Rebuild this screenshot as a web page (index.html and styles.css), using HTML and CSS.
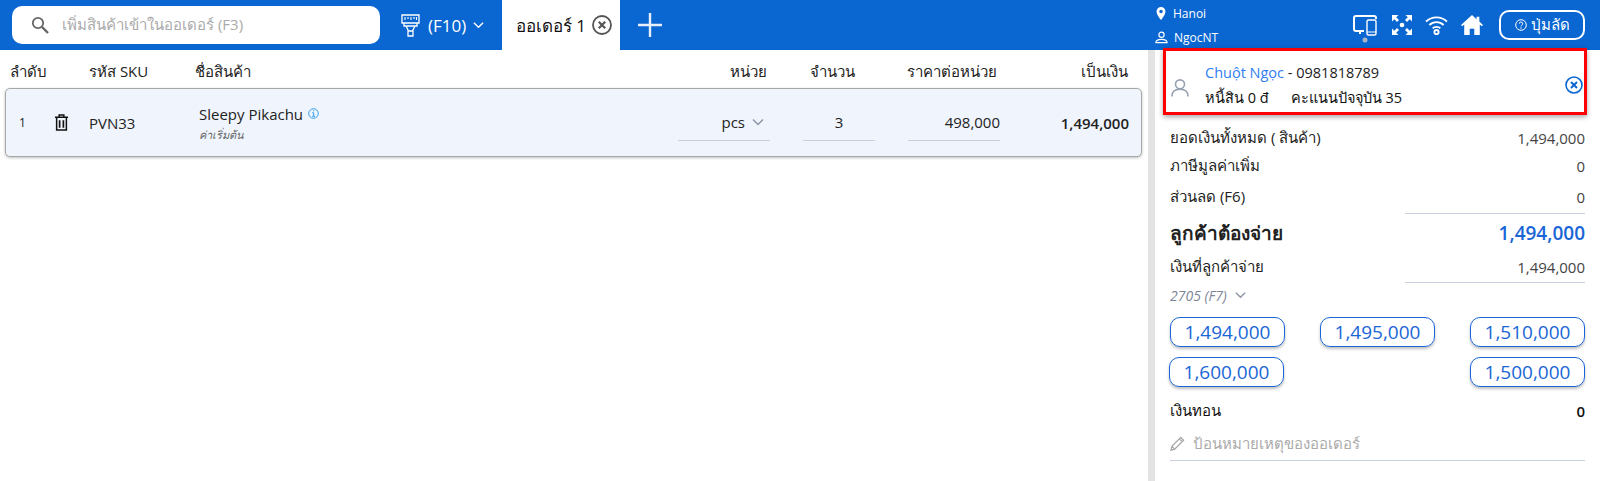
FILE: index.html
```html
<!DOCTYPE html>
<html lang="en">
<head>
    <meta charset="UTF-8">
    <title>POS</title>
    <link rel="stylesheet" href="styles.css">
</head>
<body>
<div class="topbar">
    <div class="search">
        <svg class="search-icon" viewBox="0 0 20 20" width="20" height="20"><circle cx="8" cy="8" r="5.200" fill="none" stroke="#666" stroke-width="1.800"/><path d="M12 12l6 6" stroke="#666" stroke-width="2.400"/></svg>
        <span>เพิ่มสินค้าเข้าในออเดอร์ (F3)</span>
    </div>
    <div class="scanner">
        <svg viewBox="0 0 19 23" width="19" height="23" fill="none" stroke="#fff" stroke-width="1.300"><path d="M1 1h17v8H1zM3 9v3h13V9M5 12h9l-2 4v6H7v-6zM7 17h5"/><path d="M4 3v3M7 3v2M10 3v3M13 3v2M15.500 3v3" stroke-width="1.100"/></svg>
        <span>(F10)</span>
        <svg class="chev" viewBox="0 0 12 8" width="11" height="8"><path d="M1 1.500l5 5 5-5" fill="none" stroke="#fff" stroke-width="1.500"/></svg>
    </div>
    <div class="tab">
        <span>ออเดอร์ 1</span>
        <svg viewBox="0 0 20 20" width="20" height="20" fill="none" stroke="#555" stroke-width="1.800"><circle cx="10" cy="10" r="9"/><path d="M6.800 6.800l6.400 6.400M13.200 6.800l-6.400 6.400" stroke-width="2.200"/></svg>
    </div>
    <svg class="plus" viewBox="0 0 24 24" width="24" height="24"><path d="M12 0v24M0 12h24" stroke="#e8effa" stroke-width="2.400"/></svg>
    <div class="topbar-right">
        <div class="place">
            <div class="place-row"><svg viewBox="0 0 12 14" width="12" height="13"><path fill="#fff" fill-rule="evenodd" d="M6 0a4.800 4.800 0 0 0-4.800 4.800C1.200 8.300 6 14 6 14s4.800-5.700 4.800-9.200A4.800 4.800 0 0 0 6 0zm0 3a1.900 1.900 0 1 1 0 3.800A1.900 1.900 0 0 1 6 3z"/></svg>Hanoi</div>
            <div class="place-row"><svg viewBox="0 0 14 14" width="13" height="13" fill="none" stroke="#fff" stroke-width="1.300"><circle cx="7" cy="4" r="2.800"/><path d="M1 12.500c0-2.500 2-3.500 6-3.500s6 1 6 3.500z"/></svg>NgocNT</div>
        </div>
        <svg class="devices" viewBox="0 0 24 30" width="24" height="30" fill="none" stroke="#fff" stroke-width="2"><path d="M11 16H3a2 2 0 0 1-2-2V3a2 2 0 0 1 2-2h18a2 2 0 0 1 2 2v1M7 16v3"/><rect x="14" y="5" width="9" height="15" rx="1.500" stroke-width="1.400"/><path d="M14 17h9" stroke-width="1"/><circle cx="12" cy="25" r="2.500" fill="#aab4c4" stroke="none"/></svg>
        <svg class="expand" viewBox="0 0 22 22" width="22" height="22" fill="#fff"><circle cx="11" cy="11" r="2.300"/><path d="M1 1h6.500L5.200 3.300 8 6 6 8 3.300 5.200 1 7.500zM21 1v6.500l-2.300-2.300L16 8l-2-2 2.800-2.700L14.500 1zM1 21v-6.500l2.300 2.300L6 14l2 2-2.800 2.700L7.500 21zM21 21h-6.500l2.300-2.300L14 16l2-2 2.700 2.800 2.300-2.300z"/></svg>
        <svg class="wifi" viewBox="0 0 24 21" width="23" height="20" fill="none" stroke="#fff" stroke-width="2"><path d="M1 7c6-6 16-6 22 0M4.500 10.500c4-4 11-4 15 0M8 14c2-2 6-2 8 0"/><circle cx="12" cy="18" r="2.200"/></svg>
        <svg viewBox="0 0 24 24" width="22" height="22" fill="#fff"><path d="M12 1L0 12l1.300 1.400L3.500 11.500V23h6v-7h5v7h6V11.500l2.200 1.900L24 12l-4-3.700V3h-3v2.600z"/></svg>
        <div class="shortcut">
            <svg viewBox="0 0 12 12" width="12" height="12"><circle cx="6" cy="6" r="5.300" fill="none" stroke="#fff" stroke-width="1"/><path d="M4.300 4.700a1.700 1.700 0 1 1 2.500 1.500c-.6.300-.8.600-.8 1.200" fill="none" stroke="#fff"/><circle cx="6" cy="9" r=".7" fill="#fff"/></svg>
            <span>ปุ่มลัด</span>
        </div>
    </div>
</div>
<div class="main">
    <div class="order">
        <div class="cols cols-head">
            <div class="c-no">ลำดับ</div>
            <div class="c-sku">รหัส SKU</div>
            <div class="c-name">ชื่อสินค้า</div>
            <div class="c-unit">หน่วย</div>
            <div class="c-qty">จำนวน</div>
            <div class="c-price">ราคาต่อหน่วย</div>
            <div class="c-total">เป็นเงิน</div>
        </div>
        <div class="cols item">
            <div class="i-no">1</div>
            <svg class="trash" viewBox="0 0 16 18" width="15" height="17" fill="none" stroke="#111" stroke-width="1.600"><path d="M1 3.500h14M5.500 3V1h5v2M2.800 4v13h10.400V4"/><path d="M6 6.500v8M10 6.500v8" stroke-width="1.800"/></svg>
            <div class="i-sku">PVN33</div>
            <div class="i-name">
                <div class="i-title">Sleepy Pikachu
                    <svg viewBox="0 0 12 12" width="11" height="11" fill="none" stroke="#2196f3"><circle cx="6" cy="6" r="5.200"/><path d="M4.500 5.200H6.200V9M4.500 9h3.200M5.500 3h1.200"/></svg>
                </div>
                <div class="i-variant">ค่าเริ่มต้น</div>
            </div>
            <div class="i-unit field">pcs
                <svg viewBox="0 0 12 8" width="12" height="8"><path d="M1 1.500l5 5 5-5" fill="none" stroke="#8c95a6" stroke-width="1.500"/></svg>
            </div>
            <div class="i-qty field">3</div>
            <div class="i-price field">498,000</div>
            <div class="i-total">1,494,000</div>
        </div>
    </div>
    <div class="side">
        <div class="customer">
            <svg class="avatar" viewBox="0 0 20 20" width="18" height="19" fill="none" stroke="#98a1b1" stroke-width="1.800"><circle cx="10" cy="6.500" r="5"/><path d="M1 20c0-5 3-8 9-8s9 3 9 8"/></svg>
            <div class="cust-info">
                <div class="cust-line"><span class="cust-name">Chuột Ngọc</span> - 0981818789</div>
                <div class="cust-line cust-sub"><span>หนี้สิน 0 đ</span><span>คะแนนปัจจุบัน 35</span></div>
            </div>
            <svg class="cust-x" viewBox="0 0 18 18" width="18" height="18" fill="none" stroke="#0a66d1" stroke-width="1.600"><circle cx="9" cy="9" r="8"/><path d="M6 6l6 6M12 6l-6 6" stroke-width="2"/></svg>
        </div>
        <div class="sum sum-total"><span>ยอดเงินทั้งหมด ( สินค้า)</span><span class="muted">1,494,000</span></div>
        <div class="sum sum-vat"><span>ภาษีมูลค่าเพิ่ม</span><span class="muted">0</span></div>
        <div class="sum sum-disc"><span>ส่วนลด (F6)</span><span class="muted">0</span></div>
        <div class="rule"></div>
        <div class="sum sum-pay"><span>ลูกค้าต้องจ่าย</span><span class="pay-num">1,494,000</span></div>
        <div class="sum sum-paid"><span>เงินที่ลูกค้าจ่าย</span><span class="muted">1,494,000</span></div>
        <div class="rule"></div>
        <div class="method">2705 (F7)
            <svg viewBox="0 0 12 8" width="11" height="8"><path d="M1 1.500l5 5 5-5" fill="none" stroke="#8c95a6" stroke-width="1.500"/></svg>
        </div>
        <div class="quick">
            <div class="q">1,494,000</div>
            <div class="q">1,495,000</div>
            <div class="q">1,510,000</div>
            <div class="q q-shift">1,600,000</div>
            <div class="q q-last">1,500,000</div>
        </div>
        <div class="sum sum-change"><span>เงินทอน</span><span>0</span></div>
        <div class="note">
            <svg viewBox="0 0 16 16" width="15" height="15" fill="none" stroke="#a5a5a5" stroke-width="1.300"><path d="M1 15l1-4L11.500 1.500l3 3L5 14zM2 11l3 3M10 3l3 3"/></svg>
            <span>ป้อนหมายเหตุของออเดอร์</span>
        </div>
    </div>
</div>
</body>
</html>
```
FILE: styles.css
```css
html,body{overflow:hidden;}
body{margin:0;height:481px;background:#fff;color:#222;font-family:"Open Sans","Noto Sans",sans-serif;font-size:15px;}
.topbar{display:flex;align-items:center;height:50px;background:#0a66d1;color:#fff;}
.search{display:flex;align-items:center;width:368px;height:38px;margin-left:12px;background:#fff;border-radius:10px;color:#aaa;box-sizing:border-box;padding-left:18px;}
.search span{margin-left:12px;}
.scanner{display:flex;align-items:center;margin-left:20px;padding-left:1px;box-sizing:border-box;width:102px;font-size:17px;}
.scanner span{margin-left:8px;}
.chev{margin-left:7px;}
.tab{display:flex;align-items:center;justify-content:flex-end;width:118px;height:50px;box-sizing:border-box;padding-right:8px;background:#fff;color:#111;font-size:17px;font-weight:500;gap:6px;}
.plus{margin-left:18px;}
.topbar-right{display:flex;align-items:center;margin-left:auto;padding-right:15px;gap:13px;}
.place{width:185px;font-size:12px;display:flex;flex-direction:column;gap:7px;}
.place-row{display:flex;align-items:center;gap:6px;}
.devices{margin-top:10px;}
.expand{margin-left:1px;}
.wifi{margin-left:-1px;}
.shortcut{display:flex;align-items:center;justify-content:center;gap:4px;width:86px;height:30px;margin-left:3px;border:2px solid #fff;border-radius:10px;font-size:15px;font-weight:500;box-sizing:border-box;}
.main{display:flex;height:431px;}
.order{width:1148px;box-sizing:border-box;padding:0 6px 0 5px;}
.cols{display:flex;align-items:center;}
.cols-head{height:38px;box-sizing:border-box;padding:6px 14px 0 0;}
.c-no{width:84px;padding-left:5px;box-sizing:border-box;}
.c-sku{width:106px;}
.c-name{flex:1;}
.c-unit{width:80px;text-align:right;}
.c-qty{width:88px;text-align:right;}
.c-price{width:142px;text-align:right;}
.c-total{width:131px;text-align:right;}
.item{height:69px;box-sizing:border-box;padding-right:12px;background:#f0f5fd;border:1px solid #a8a8a8;border-radius:5px;box-shadow:0 1px 3px rgba(0,0,0,.25);}
.i-no{width:30px;padding-left:13px;box-sizing:border-box;font-size:12px;}
.trash{margin-left:18px;flex:none;}
.i-sku{width:110px;margin-left:20px;}
.i-name{flex:1;margin-top:2px;}
.i-title{display:flex;align-items:center;gap:5px;}
.i-variant{margin-top:2px;font-size:11px;font-style:italic;color:#666;}
.field{display:flex;align-items:center;justify-content:flex-end;height:36px;border-bottom:1px solid #c9d0de;box-sizing:border-box;}
.i-unit{width:92px;gap:7px;padding-right:6px;}
.i-qty{width:72px;margin-left:33px;justify-content:center;}
.i-price{width:92px;margin-left:33px;}
.i-total{width:129px;text-align:right;font-weight:600;}
.side{width:444px;margin-left:8px;box-sizing:border-box;position:relative;padding:0 15px 0 14px;height:431px;}
.side::before{content:"";position:absolute;left:-8px;top:0;bottom:0;width:7px;background:#e3e3e3;}
.customer{display:flex;align-items:center;height:67px;margin:-2px 0 0 -7px;width:424px;box-sizing:border-box;border:3px solid #f00;background:#fff;box-shadow:0 2px 5px rgba(0,0,0,.35);padding:0 1px 0 5px;position:relative;}
.avatar{flex:none;margin-top:12px;}
.cust-info{flex:1;margin-left:16px;margin-top:6px;font-size:14.500px;}
.cust-line{height:25px;line-height:25px;}
.cust-name{color:#2f7df0;}
.cust-sub{display:flex;gap:22px;color:#111;}
.cust-x{flex:none;margin-top:7px;}
.sum{display:flex;justify-content:space-between;align-items:center;}
.muted{color:#444;}
.sum-total{height:28px;margin-top:9px;}
.sum-vat{height:28px;}
.sum-disc{height:33px;}
.rule{margin-left:235px;border-top:1px solid #c9d0de;}
.sum-pay{height:37px;font-size:19px;font-weight:600;}
.pay-num{color:#1a66d6;}
.sum-paid{height:31px;}
.method{display:flex;align-items:center;gap:8px;height:24px;font-style:italic;font-size:14px;color:#7d8696;}
.quick{display:grid;grid-template-columns:115px 115px 115px;justify-content:space-between;row-gap:10px;margin-top:10px;}
.q{height:30px;line-height:28px;box-sizing:border-box;text-align:center;border:1px solid #1a66d6;border-radius:10px;box-shadow:0 2px 3px rgba(0,0,0,.25);color:#1a66d6;font-size:19px;font-weight:500;}
.q-shift{margin-left:-1px;margin-right:1px;}
.q-last{grid-column:3;}
.sum-change{height:32px;margin-top:8px;color:#111;font-weight:600;}
.sum-change span:first-child{font-weight:400;}
.note{display:flex;align-items:center;gap:8px;height:34px;border-bottom:1px solid #c9d0de;color:#aaa;box-sizing:border-box;}
```
